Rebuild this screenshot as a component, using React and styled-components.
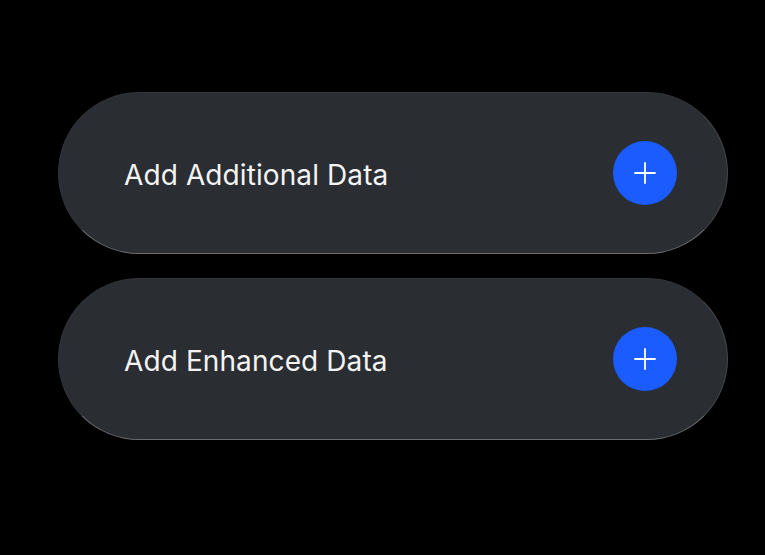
import styled, { createGlobalStyle } from "styled-components";

const GlobalStyle = createGlobalStyle`
    html, body {
        margin: 0;
        padding: 0;
        background: #000;
    }
    body {
        font-family: Inter, "Noto Sans", sans-serif;
        -webkit-font-smoothing: antialiased;
    }
`;

const items = ["Add Additional Data", "Add Enhanced Data"];

export default function App() {
    return (
        <>
            <GlobalStyle />
            <Page>
                <List>
                    {items.map((label) => (
                        <Pill key={label}>
                            <Label>{label}</Label>
                            <AddButton aria-label={label}>
                                <svg width="22" height="22" viewBox="0 0 22 22" fill="none">
                                    <path d="M11 1v20M1 11h20" stroke="#fff" strokeWidth="1.8" strokeLinecap="round" />
                                </svg>
                            </AddButton>
                        </Pill>
                    ))}
                </List>
            </Page>
        </>
    );
}

const Page = styled.div`
    width: 765px;
    height: 555px;
    background: #000;
    padding: 92px 0 0 58px;
    box-sizing: border-box;
`;

const List = styled.div`
    display: flex;
    flex-direction: column;
    gap: 24px;
    width: 670px;
`;

const Pill = styled.div`
    height: 162px;
    box-sizing: border-box;
    border-radius: 81px;
    background: #2a2d32;
    border: 1.5px solid #33363b;
    border-bottom-color: #6a6c70;
    border-right-color: #45474b;
    display: flex;
    align-items: center;
    justify-content: space-between;
    padding: 0 50px 0 65px;
`;

const Label = styled.span`
    color: #f4f4f4;
    font-size: 28px;
    font-weight: 430;
    letter-spacing: 0.1px;
    margin-top: 3px;
`;

const AddButton = styled.button`
    width: 64px;
    height: 64px;
    border-radius: 50%;
    border: none;
    padding: 0;
    background: #1a5cff;
    display: flex;
    align-items: center;
    justify-content: center;
    cursor: pointer;
`;
